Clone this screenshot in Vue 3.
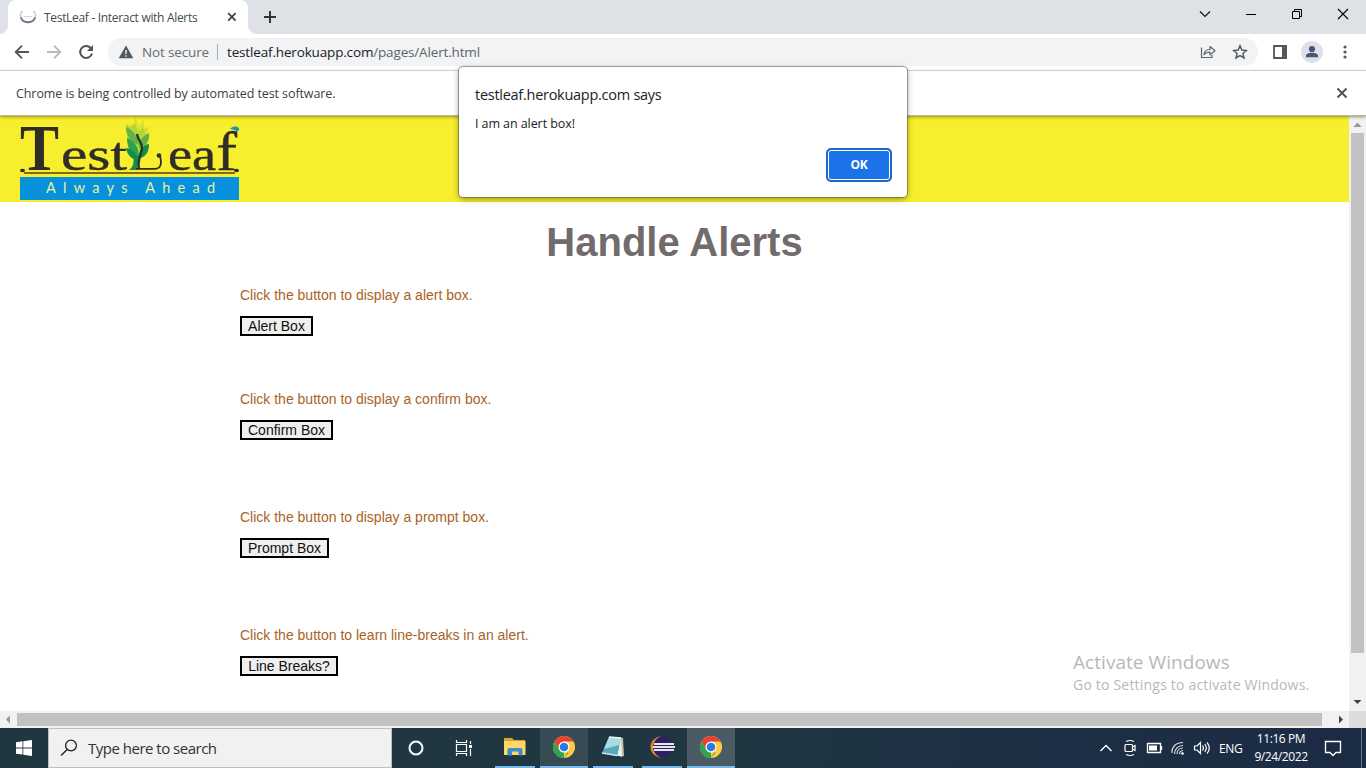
<script setup>
const demos = [
  { text: 'Click the button to display a alert box.', label: 'Alert Box', width: 73, gap: 54 },
  { text: 'Click the button to display a confirm box.', label: 'Confirm Box', width: 93, gap: 68 },
  { text: 'Click the button to display a prompt box.', label: 'Prompt Box', width: 89, gap: 68 },
  { text: 'Click the button to learn line-breaks in an alert.', label: 'Line Breaks?', width: 98, gap: 0 },
]
const apps = [
  { name: 'explorer', state: 'small' },
  { name: 'chrome', state: 'open' },
  { name: 'notepad', state: 'small' },
  { name: 'eclipse', state: 'small' },
  { name: 'chrome', state: 'active' },
]
</script>

<template>
  <div class="screen">
    <div class="tabs">
      <div class="tab">
        <svg class="fav" width="18" height="16" viewBox="0 0 18 16"><path d="M3.500 2C-1 7 3 13.500 9 13.500s10-6.500 5.500-11.500" fill="none" stroke="#e0c4c6" stroke-width="1.500" /><path d="M1.800 8.500c2 6.300 12.400 6.300 14.400 0" fill="none" stroke="#6d7290" stroke-width="1.800" /><path d="M5 7.500h8" stroke="#e2d3d5" /></svg>
        <span class="tabtitle">TestLeaf - Interact with Alerts</span>
        <svg class="tabx" width="10" height="10" viewBox="0 0 10 10"><path d="M1.200 1.200l7.400 7.400M8.600 1.200L1.200 8.600" stroke="#3c4043" stroke-width="1.700" /></svg>
      </div>
      <svg class="plus" width="14" height="14" viewBox="0 0 14 14"><path d="M7 1v12M1 7h12" stroke="#303338" stroke-width="2" /></svg>
      <div class="winbtns">
        <svg width="46" height="28" viewBox="0 0 46 28"><path d="M18 11.500l5 5 5-5" fill="none" stroke="#111" stroke-width="1.200" /></svg>
        <svg width="46" height="28" viewBox="0 0 46 28"><path d="M18 14.500h10" stroke="#000" /></svg>
        <svg width="46" height="28" viewBox="0 0 46 28"><path d="M18.500 11.500h7v7h-7zM20.500 11.500v-2h7v7h-2" fill="none" stroke="#000" /></svg>
        <svg width="46" height="28" viewBox="0 0 46 28"><path d="M18 9l10 10M28 9L18 19" stroke="#000" stroke-width="1.100" /></svg>
      </div>
    </div>

    <div class="toolbar">
      <div class="nav">
        <svg viewBox="0 0 32 32"><path d="M23 16H10M16 9.700L9.700 16l6.300 6.300" fill="none" stroke="#55585d" stroke-width="1.900" /></svg>
        <svg viewBox="0 0 32 32"><path d="M9 16H22M16 9.700l6.300 6.300-6.300 6.300" fill="none" stroke="#b9bbbe" stroke-width="1.900" /></svg>
        <svg viewBox="0 0 32 32"><path d="M20.700 12A6 6 0 1 0 22 17.500" fill="none" stroke="#4f5357" stroke-width="2" /><path d="M23 9v6h-6z" fill="#4f5357" /></svg>
      </div>
      <div class="omni">
        <svg class="warn" width="16" height="14" viewBox="0 0 16 14"><path d="M8 .5L15.300 13.300H.7z" fill="#53575b" /><path d="M8 5v4M8 10.300v1.500" stroke="#f1f3f4" stroke-width="1.400" /></svg>
        <span class="notsec">Not secure</span><i class="sep"></i>
        <span class="url">testleaf.herokuapp.com<em>/pages/Alert.html</em></span>
        <svg class="share" width="16" height="16" viewBox="0 0 16 16"><path d="M1.500 3.500v10h10.500v-2.500" fill="none" stroke="#5f6368" stroke-width="1.200" /><path d="M4 10.500c.5-3.500 2.500-5 6-5V2.500l5 4.200-5 4.200V8.200c-2.800 0-4.500.6-6 2.300z" fill="none" stroke="#5f6368" stroke-width="1.200" stroke-linejoin="round" /></svg>
        <svg class="star" width="16" height="16" viewBox="0 0 16 16"><path d="M8 1.800l1.800 4.300 4.600.4-3.500 3 1.100 4.500L8 11.600 4 14l1.100-4.500-3.500-3 4.600-.4z" fill="none" stroke="#55595d" stroke-width="1.500" /></svg>
      </div>
      <svg class="panel" width="14" height="14" viewBox="0 0 14 14"><path d="M1 1h12v12H1z" fill="none" stroke="#55565e" stroke-width="1.800" /><path d="M9 0h5v14H9z" fill="#55565e" /></svg>
      <svg class="avatar" width="22" height="22" viewBox="0 0 22 22"><circle cx="11" cy="11" r="11" fill="#dee1e9" /><circle cx="11" cy="8" r="3.100" fill="#4c5473" /><path d="M5 16.300v-1.500c0-4 12-4 12 0v1.500z" fill="#4c5473" /></svg>
      <svg class="more" width="4" height="16" viewBox="0 0 4 16"><g fill="#55585d"><circle cx="2" cy="3" r="1.600" /><circle cx="2" cy="8" r="1.600" /><circle cx="2" cy="13" r="1.600" /></g></svg>
    </div>

    <div class="info">
      <span>Chrome is being controlled by automated test software.</span>
      <svg width="12" height="12" viewBox="0 0 12 12"><path d="M1.500 1.500l9 9M10.500 1.500l-9 9" stroke="#505357" stroke-width="1.900" /></svg>
    </div>

    <div class="view">
      <div class="page">
        <div class="banner">
          <svg class="logo" width="220" height="84" viewBox="0 0 220 84">
            <g font-family="Liberation Serif, serif" fill="#302c28">
              <text x="0" y="53.500" font-size="65" font-weight="bold" textLength="39" lengthAdjust="spacingAndGlyphs">T</text>
              <text x="41" y="53.500" font-size="47" textLength="66" lengthAdjust="spacingAndGlyphs" stroke="#302c28" stroke-width=".4">est</text>
              <text x="148" y="53.500" font-size="47" textLength="69" lengthAdjust="spacingAndGlyphs" stroke="#302c28" stroke-width=".4">ea<tspan font-size="54">f</tspan></text>
            </g>
            <path d="M110 6l3 5 2-10 4 9 5-7v9l5-1-3 11-7 12-11-10-3-13 5 3z" fill="#dde02e" />
            <path d="M106 8l5 3 4-4 3 9 6-5 1 7 4 1-3 12-8 7-10-9z" fill="#b4d636" />
            <path d="M106 11c6 2 11 8 13 18-8-2-13-9-13-18z" fill="#62b345" />
            <path d="M107 22c7 3 12 8 12 20-8-2-12-11-12-20z" fill="#2ca24b" />
            <path d="M106 32c7 1 11 5 12 12-6 0-11-5-12-12z" fill="#188a4f" />
            <path d="M129 17c-7 3-10 8-10 15 7-1 11-7 10-15z" fill="#62b345" />
            <path d="M129 28c-6 1-10 6-11 15 8-2 11-7 11-15z" fill="#188a4f" />
            <path d="M109 54c6-4 4-10 5-14h5l-2 14z" fill="#148957" />
            <path d="M117 18c1 7 5 8 5 14-1 8-5 12-3 21" fill="none" stroke="#233929" stroke-width="2.400" />
            <path d="M116 52.800h19c6 0 7-5 5-13" fill="none" stroke="#302c28" stroke-width="1.800" />
            <circle cx="139" cy="39.500" r="2.300" fill="#302c28" />
            <path d="M210 13c3-4 10-3 9 1-2 3-4-1-9-1z" fill="#1690c5" />
            <ellipse cx="2.500" cy="54.500" rx="2.500" ry="1.800" fill="#302c28" /><ellipse cx="216.500" cy="54.500" rx="2.500" ry="1.800" fill="#302c28" />
            <path d="M4 57h211" stroke="#8b651c" stroke-width="1.800" />
            <path d="M0 61h219v23H0z" fill="#0791dc" />
            <text x="26" y="76.500" font-family="Lato, sans-serif" font-size="14.500" fill="#e4f59b" textLength="169">Always Ahead</text>
          </svg>
        </div>
        <h1>Handle Alerts</h1>
        <section v-for="d in demos" :key="d.label" :style="{ marginBottom: d.gap + 'px' }">
          <p>{{ d.text }}</p>
          <button :style="{ width: d.width + 'px' }">{{ d.label }}</button>
        </section>
        <div class="activate"><b>Activate Windows</b><span>Go to Settings to activate Windows.</span></div>
      </div>
      <div class="vscroll">
        <svg width="17" height="17" viewBox="0 0 17 17"><path d="M4.500 11h8l-4-4.500z" fill="#969696" /></svg>
        <i></i>
        <svg width="17" height="17" viewBox="0 0 17 17"><path d="M4.500 6h8l-4 4z" fill="#444" /></svg>
      </div>
    </div>
    <div class="hscroll">
      <svg width="17" height="17" viewBox="0 0 17 17"><path d="M10 4.500v8l-4-4z" fill="#969696" /></svg>
      <i></i>
      <svg width="17" height="17" viewBox="0 0 17 17"><path d="M7 4.500v8l4-4z" fill="#444" /></svg>
    </div>

    <div class="taskbar">
      <div class="start"><svg width="16" height="16" viewBox="0 0 16 16"><path d="M0 2.200l6.500-.9v6.200H0zM7.300 1.200L16 0v7.500H7.300zM0 8.400h6.500v6.200L0 13.700zM7.300 8.400H16V16l-8.700-1.200z" fill="#fff" /></svg></div>
      <div class="search"><svg width="18" height="18" viewBox="0 0 18 18"><circle cx="11" cy="6.500" r="5.400" fill="none" stroke="#222" stroke-width="1.300" /><path d="M7.200 10.400L1 16.600" stroke="#222" stroke-width="1.400" /></svg><span>Type here to search</span></div>
      <div class="slot"><svg width="18" height="18" viewBox="0 0 18 18"><circle cx="9" cy="9" r="6.500" fill="none" stroke="#f5f7f8" stroke-width="2.100" /></svg></div>
      <div class="slot"><svg width="18" height="18" viewBox="0 0 18 18"><path d="M1.500 1v2.500h10V1M1.500 17v-2.500h10V17M1.500 5.500h10v7h-10zM15.500 2v3M15.500 10v7" fill="none" stroke="#fff" stroke-width="1.200" /><path d="M14 6h3v3h-3z" fill="#fff" /></svg></div>
      <div class="apps">
        <div v-for="(a, i) in apps" :key="i" class="app" :class="a.state">
          <svg v-if="a.name === 'explorer'" width="22" height="20" viewBox="0 0 22 20"><path d="M0 1h8l2 2h11v4H0z" fill="#e1a32b" /><path d="M0 4h21.500v14H0z" fill="#ffd767" /><path d="M3.500 18.500v-5.500q0-2 2-2h11q2 0 2 2v5.500h-4v-4H8v4z" fill="#3c8dcb" /></svg>
          <svg v-else-if="a.name === 'chrome'" width="22" height="22" viewBox="0 0 22 22"><circle cx="11" cy="11" r="11" fill="#ffcd42" /><path d="M1.470 5.500A11 11 0 0 1 20.530 5.500H11L6.240 13.750z" fill="#e74135" /><path d="M1.470 5.500L6.240 13.750 11 16.500h4.760L11 22A11 11 0 0 1 1.470 5.500z" fill="#2fa34f" /><path d="M11 22l4.760-8.250L11 11z" fill="#ffcd42" /><circle cx="11" cy="11" r="5.500" fill="#fff" /><circle cx="11" cy="11" r="4.300" fill="#287be5" /></svg>
          <svg v-else-if="a.name === 'notepad'" width="24" height="24" viewBox="0 0 24 24"><path d="M18 2l4 1 1 18-4 1z" fill="#c9bfa5" /><path d="M8 2l12 1-4 18L1 18z" fill="#58a9b9" /><path d="M8 2l12 1-2 7L3 14z" fill="#a9dce3" /><path d="M20 3l1 18-5 0z" fill="#e7f1f0" /><path d="M1 18l15 2.500" stroke="#c9eaf0" stroke-width="1.500" /><path d="M8 2l12 1" stroke="#f1f5f4" stroke-width="1.500" /></svg>
          <svg v-else width="25" height="24" viewBox="0 0 25 24"><path d="M11 1C-3 4-3 20 11 23 1 18 2 6 11 1z" fill="#e48b38" /><circle cx="13.500" cy="12" r="10.500" fill="#2d2160" /><path d="M4 9h20M3 12h22M4 15h20" stroke="#e9e5ef" stroke-width="1.800" /></svg>
        </div>
      </div>
      <div class="tray">
        <svg viewBox="0 0 24 24"><path d="M6.500 15l5.500-5.500 5.500 5.500" fill="none" stroke="#fff" stroke-width="1.400" /></svg>
        <svg viewBox="0 0 24 24"><g fill="none" stroke="#fff" stroke-width="1.200"><rect x="7" y="8.500" width="7.500" height="7" rx="1" /><path d="M14.500 11l2.500-1.500v5L14.500 13M8 5.500q4-2 8 0M8 18.500q4 2 8 0" /></g></svg>
        <svg viewBox="0 0 24 24"><path d="M5.500 7.500h13v9h-13zM19.500 10v4" fill="none" stroke="#fff" stroke-width="1.300" /><path d="M7 9.500h8v5H7z" fill="#fff" /></svg>
        <svg viewBox="0 0 24 24"><g fill="none" stroke="#dce2e8" stroke-width="1.200"><path d="M6 17C5.500 11 10 6.500 17 6.500M8.500 18c0-5 3.500-8.500 8.500-8.500M11 18c0-3.500 2.500-6 6-6M13.500 18q0-3 3.500-3.500" /></g><circle cx="16.500" cy="17.500" r="1.300" fill="#fff" /></svg>
        <svg viewBox="0 0 24 24"><path d="M4.500 10h2.500l3.500-3.500v11L7 14H4.500zM12.500 9.500q2 2.500 0 5M14.800 8q3 4 0 8M17 6.500q4.500 5.500 0 11" fill="none" stroke="#fff" stroke-width="1.200" /></svg>
        <span class="lang">ENG</span>
        <div class="clock"><span>11:16 PM</span><span>9/24/2022</span></div>
        <svg class="notif" width="18" height="18" viewBox="0 0 18 18"><path d="M1.500 2.500h15v11H12l-3 3-3-3H1.500z" fill="none" stroke="#fff" stroke-width="1.300" /></svg>
        <i class="peek"></i>
      </div>
    </div>

    <div class="dialog">
      <div class="says">testleaf.herokuapp.com says</div>
      <div class="msg">I am an alert box!</div>
      <div class="ok">OK</div>
    </div>
  </div>
</template>

<style>
body { overflow: hidden; }
</style>
<style scoped>
* { box-sizing: border-box; }
svg { display: block; flex: none; }
span { white-space: nowrap; }
.logo { overflow: visible; }
.screen { width: 1366px; height: 768px; display: flex; flex-direction: column; position: relative; overflow: hidden; background: #fff; font-family: "Open Sans", "Noto Sans", sans-serif; font-size: 12px; }
.tabs { height: 34px; background: #dee1e6; display: flex; padding-left: 8px; flex: none; }
.tab { position: relative; width: 240px; height: 34px; background: #fff; border-radius: 8px 8px 0 0; display: flex; align-items: center; padding: 0 11px 0 11px; }
.tab::before, .tab::after { content: ""; position: absolute; bottom: 0; width: 8px; height: 8px; }
.tab::before { left: -8px; background: radial-gradient(circle at 0 0, transparent 7.5px, #fff 8px); }
.tab::after { right: -8px; background: radial-gradient(circle at 100% 0, transparent 7.5px, #fff 8px); }
.tabtitle { margin-left: 7px; color: #45494d; letter-spacing: -.31px; }
.tabx { margin-left: auto; }
.plus { margin: 10px 0 0 15px; }
.winbtns { margin-left: auto; display: flex; }
.toolbar { height: 37px; flex: none; display: flex; align-items: center; border-bottom: 1px solid #dadce0; }
.nav { display: flex; margin-left: 6px; }
.nav svg { width: 32px; height: 32px; }
.omni { margin-left: 6px; width: 1150px; height: 28px; border-radius: 14px; background: #f1f3f4; display: flex; align-items: center; padding: 0 10px; }
.notsec { margin-left: 8px; color: #686c70; width: 67px; letter-spacing: -.14px; font-size: 13.5px; }
.sep { width: 1px; height: 16px; background: #a9acb0; margin: 0 9px 0 8px; }
.url { color: #202124; letter-spacing: -.16px; font-size: 13.5px; }
.url em { font-style: normal; color: #5f6368; }
.share { margin-left: auto; }
.star { margin-left: 16px; }
.panel { margin-left: 15px; }
.avatar { margin-left: 14px; }
.more { margin-left: 20px; }
.info { height: 45px; flex: none; display: flex; align-items: center; justify-content: space-between; padding: 0 18px 0 16px; color: #3c4043; font-size: 12.5px; letter-spacing: -.09px; border-bottom: 1px solid #bcb997; position: relative; z-index: 1; box-shadow: 0 1px 3px rgba(60, 60, 20, .5); }
.view { height: 595px; flex: none; display: flex; }
.page { width: 1349px; position: relative; font-family: "Liberation Sans", Arial, sans-serif; }
.banner { height: 86px; background: #f7ee2d; padding: 0 0 0 20px; }
h1 { margin: 15px 0 0; height: 50px; line-height: 50px; font-size: 40px; text-align: center; color: #726b6b; }
section { margin-left: 240px; height: 50px; }
h1 + section { margin-top: 19px; }
p { margin: 0 0 12px; height: 18px; line-height: 19px; font-size: 14px; color: #a9631f; }
button { display: block; height: 20px; padding: 0; border: 2px solid #000; background: #efefef; color: #111; font: 14px/16px "Liberation Sans", Arial, sans-serif; text-align: center; }
.activate { position: absolute; left: 1073px; top: 533px; display: flex; flex-direction: column; color: #b8b8b8; font-family: "Open Sans", sans-serif; }
.activate b { font-weight: 400; font-size: 19px; line-height: 26px; white-space: nowrap; letter-spacing: .05px; }
.activate span { font-size: 14px; line-height: 20px; letter-spacing: .2px; }
.vscroll { width: 17px; background: #f1f1f1; display: flex; flex-direction: column; align-items: center; }
.vscroll i { width: 13px; height: 520px; background: #c1c1c1; margin-bottom: auto; }
.hscroll { height: 17px; flex: none; background: linear-gradient(90deg, #f1f1f1 1349px, #dcdcdc 1349px); display: flex; align-items: center; }
.hscroll i { width: 1305px; height: 13px; background: #c1c1c1; margin-right: 10px; }
.taskbar { height: 40px; flex: none; display: flex; background: linear-gradient(90deg, #203740 0, #203741 700px, #1d3044 1000px, #1b2b44 1366px); color: #fff; }
.start, .slot { width: 48px; display: flex; align-items: center; justify-content: center; }
.search { width: 344px; background: #f1f1f1; border: 1px solid #bfbfbf; display: flex; align-items: center; padding-left: 11px; color: #333; font-size: 15px; }
.search span { margin-left: 10px; letter-spacing: -.5px; }
.apps { display: flex; margin-left: 7px; gap: 5px; }
.app { height: 40px; width: 40px; border-bottom: 2px solid #76b9ed; display: flex; align-items: center; justify-content: center; }
.app.open { width: 48px; background: #374b55; }
.app.active { width: 48px; background: #4b5b64; }
.app.small + .app.small { margin-left: 4px; }
.tray { margin-left: auto; display: flex; align-items: center; height: 40px; }
.tray > svg:not(.notif) { width: 24px; height: 24px; }
.lang { width: 27px; margin-left: 5px; font-size: 12px; letter-spacing: -.35px; }
.clock { width: 62px; margin-left: 4px; display: flex; flex-direction: column; align-items: center; font-size: 12px; line-height: 18px; letter-spacing: -.4px; }
.notif { margin-left: 12px; margin-right: 19px; }
.peek { width: 5px; height: 40px; border-left: 1px solid #6c7888; }
.dialog { position: absolute; z-index: 5; left: 459px; top: 67px; width: 448px; height: 130px; background: #fff; border-radius: 4px; padding: 17px 16px 16px; box-shadow: 0 0 0 1px rgba(80, 80, 60, .5), 0 2px 6px rgba(0, 0, 0, .4); color: #202124; }
.says { font-size: 14.5px; line-height: 22px; letter-spacing: -.27px; }
.msg { font-size: 12.5px; line-height: 18px; margin-top: 9px; letter-spacing: -.08px; }
.ok { margin: 17px 1px 0 auto; width: 62px; height: 30px; border-radius: 3px; border: 1px solid #fff; box-shadow: 0 0 0 2px #1a68cf; background: #1a73e8; color: #fff; font-size: 12px; line-height: 28px; font-weight: 700; text-align: center; letter-spacing: -.3px; }
</style>
